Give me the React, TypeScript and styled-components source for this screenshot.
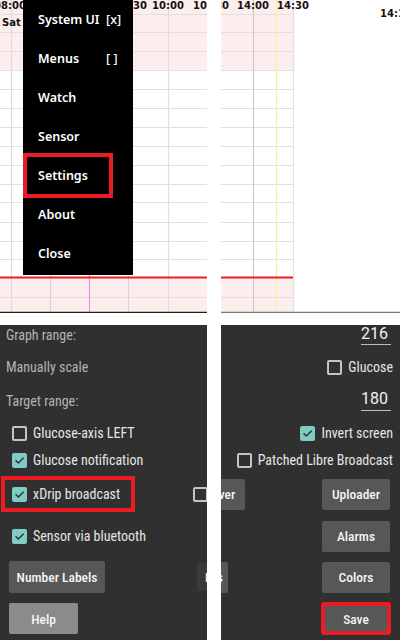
import React from "react";
import styled, { createGlobalStyle, css } from "styled-components";

const GlobalStyle = createGlobalStyle`
  html, body { margin: 0; padding: 0; background: #ffffff; }
  #root { width: 400px; height: 640px; }
`;

const Page = styled.div`
  width: 400px;
  height: 640px;
  display: grid;
  grid-template-columns: 207px 179px;
  grid-template-rows: 313px 315px;
  column-gap: 14px;
  row-gap: 12px;
  background: #ffffff;
  overflow: hidden;
`;

const GraphPane = styled.div`
  position: relative;
  overflow: hidden;
  background: #ffffff;
`;

const ChartSvg = styled.svg`
  display: block;
  font-family: "DejaVu Sans", sans-serif;
  font-weight: 700;
  font-size: 10px;
`;

type Vertical = { x: number; color: string };
type Label = { x: number; y: number; text: string; anchor?: "middle" | "start" };

const H_LINES = [14, 32, 51, 70, 89, 108, 127, 146, 165, 184, 202, 222, 241, 259, 297];

function Graph(props: {
  width: number;
  gridWidth: number;
  verticals: Vertical[];
  labels: Label[];
  baseColor: string;
}) {
  const { width, gridWidth, verticals, labels, baseColor } = props;
  return (
    <ChartSvg width={width} height={313} viewBox={`0 0 ${width} 313`}>
      <rect x={0} y={0} width={gridWidth} height={70} fill="#fdeeee" />
      <rect x={0} y={277} width={gridWidth} height={35} fill="#fdeeee" />
      {H_LINES.map((y) => (
        <line key={y} x1={0} x2={gridWidth} y1={y + 0.5} y2={y + 0.5} stroke="#e2dfdf" strokeWidth={1.2} />
      ))}
      {verticals.map((v) => (
        <line key={v.x} x1={v.x + 0.5} x2={v.x + 0.5} y1={0} y2={312} stroke={v.color} strokeWidth={1.2} />
      ))}
      <line x1={0} x2={gridWidth} y1={277.5} y2={277.5} stroke="#ee1c24" strokeWidth={2} />
      <line x1={0} x2={width} y1={312.5} y2={312.5} stroke={baseColor} strokeWidth={1.5} />
      {labels.map((l) => (
        <text key={l.text} x={l.x} y={l.y} textAnchor={l.anchor ?? "middle"} fill="#111111">
          {l.text}
        </text>
      ))}
    </ChartSvg>
  );
}

const Menu = styled.div`
  position: absolute;
  left: 23px;
  top: 0;
  width: 110px;
  height: 275px;
  background: #000000;
  display: flex;
  flex-direction: column;
`;

const MenuItem = styled.div<{ $selected?: boolean }>`
  position: relative;
  height: 39px;
  flex: none;
  display: grid;
  grid-template-columns: 68px auto;
  align-items: center;
  padding-left: 15px;
  color: #ffffff;
  font-family: "Noto Sans", sans-serif;
  font-weight: 600;
  font-size: 12.5px;
  white-space: nowrap;
  ${(p) =>
    p.$selected &&
    css`
      &::after {
        content: "";
        position: absolute;
        left: 0;
        top: -3px;
        width: 90px;
        height: 45px;
        box-sizing: border-box;
        border: 4px solid #ed1c24;
      }
    `}
`;

const Flag = styled.span`
  font-weight: 500;
  white-space: pre;
`;

const SettingsPane = styled.div`
  background: #303030;
  overflow: hidden;
  display: flex;
  flex-direction: column;
  font-family: "Roboto Condensed", Roboto, sans-serif;
`;

const Row = styled.div<{ $top: number; $h: number; $justify?: string; $padL?: number; $padR?: number }>`
  position: relative;
  flex: none;
  margin-top: ${(p) => p.$top}px;
  height: ${(p) => p.$h}px;
  display: flex;
  align-items: center;
  justify-content: ${(p) => p.$justify ?? "flex-start"};
  padding-left: ${(p) => p.$padL ?? 0}px;
  padding-right: ${(p) => p.$padR ?? 0}px;
`;

const SectionLabel = styled.span`
  color: #b4b4b4;
  font-size: 14px;
  white-space: nowrap;
`;

const CheckItem = styled.label<{ $highlight?: boolean }>`
  position: relative;
  display: flex;
  align-items: center;
  gap: 6px;
  color: #e6e6e6;
  font-size: 14px;
  white-space: nowrap;
  ${(p) =>
    p.$highlight &&
    css`
      &::after {
        content: "";
        position: absolute;
        left: -11px;
        top: -10px;
        width: 134px;
        height: 36px;
        box-sizing: border-box;
        border: 4px solid #ed1c24;
      }
    `}
`;

const Box = styled.span<{ $checked?: boolean; $edge?: number }>`
  flex: none;
  width: 15px;
  height: 15px;
  box-sizing: border-box;
  border-radius: 2px;
  border: 2px solid ${(p) => (p.$checked ? "#80cbc4" : "#c4c4c4")};
  background: ${(p) => (p.$checked ? "#80cbc4" : "transparent")};
  margin-right: ${(p) => p.$edge ?? 0}px;
  display: flex;
  align-items: center;
  justify-content: center;
`;

const ValueField = styled.div<{ $h: number }>`
  width: 30px;
  height: ${(p) => p.$h}px;
  box-sizing: border-box;
  margin-right: 9px;
  border-bottom: 1.5px solid #bdbdbd;
  color: #f2f2f2;
  font-family: Roboto, sans-serif;
  font-size: 16px;
  line-height: 18px;
  text-align: right;
  padding-right: 4px;
`;

const Button = styled.div<{
  $w: number;
  $ml?: number;
  $mr?: number;
  $bg?: string;
  $h?: number;
  $textAlign?: string;
  $highlight?: boolean;
}>`
  flex: none;
  box-sizing: border-box;
  width: ${(p) => p.$w}px;
  height: ${(p) => p.$h ?? 31}px;
  margin-left: ${(p) => p.$ml ?? 0}px;
  margin-right: ${(p) => p.$mr ?? 0}px;
  background: ${(p) => p.$bg ?? "#575757"};
  border-radius: 2px;
  color: #f4f4f4;
  font-weight: 500;
  font-size: 13.5px;
  display: flex;
  align-items: center;
  justify-content: ${(p) => p.$textAlign ?? "center"};
  padding: 0 5px;
  white-space: nowrap;
  ${(p) =>
    p.$highlight &&
    css`
      outline: 4px solid #ed1c24;
      outline-offset: -3px;
    `}
`;

const CheckMark = () => (
  <svg width="13" height="13" viewBox="0 0 24 24" fill="none">
    <path d="M4.5 12.5l5 5L20 7" stroke="#263238" strokeWidth="3" strokeLinecap="square" />
  </svg>
);

function Check(props: { checked?: boolean; label: string; highlight?: boolean }) {
  return (
    <CheckItem $highlight={props.highlight}>
      <Box $checked={props.checked}>{props.checked && <CheckMark />}</Box>
      {props.label}
    </CheckItem>
  );
}

export default function App() {
  return (
    <>
      <GlobalStyle />
      <Page>
        <GraphPane>
          <Graph
            width={207}
            gridWidth={207}
            baseColor="#1e1e1e"
            verticals={[
              { x: 11, color: "#e0dcdc" },
              { x: 50, color: "#d8d4d4" },
              { x: 89, color: "#f28cf0" },
              { x: 128, color: "#d8d4d4" },
              { x: 168, color: "#e0dcdc" },
            ]}
            labels={[
              { x: 10, y: 9, text: "08:00" },
              { x: 131, y: 9, text: "09:30" },
              { x: 168, y: 9, text: "10:00" },
              { x: 209, y: 9, text: "10:30" },
              { x: 2, y: 26, text: "Sat 07.03.", anchor: "start" },
            ]}
          />
          <Menu>
            <MenuItem>
              System UI <Flag>[x]</Flag>
            </MenuItem>
            <MenuItem>
              Menus <Flag>[ ]</Flag>
            </MenuItem>
            <MenuItem>Watch</MenuItem>
            <MenuItem>Sensor</MenuItem>
            <MenuItem $selected>Settings</MenuItem>
            <MenuItem>About</MenuItem>
            <MenuItem>Close</MenuItem>
          </Menu>
        </GraphPane>

        <GraphPane>
          <Graph
            width={179}
            gridWidth={72}
            baseColor="#777777"
            verticals={[
              { x: 32, color: "#cfcaca" },
              { x: 55, color: "#f6f29a" },
              { x: 72, color: "#e4e0e0" },
            ]}
            labels={[
              { x: -8, y: 9, text: "13:30" },
              { x: 32, y: 9, text: "14:00" },
              { x: 72, y: 9, text: "14:30" },
              { x: 159, y: 17, text: "14:15", anchor: "start" },
            ]}
          />
        </GraphPane>

        <SettingsPane>
          <Row $top={0} $h={20} $padL={6}>
            <SectionLabel>Graph range:</SectionLabel>
          </Row>
          <Row $top={13} $h={18} $padL={6}>
            <SectionLabel>Manually scale</SectionLabel>
          </Row>
          <Row $top={14} $h={21} $padL={6}>
            <SectionLabel>Target range:</SectionLabel>
          </Row>
          <Row $top={13} $h={18} $padL={12}>
            <Check label="Glucose-axis LEFT" />
          </Row>
          <Row $top={9} $h={18} $padL={12}>
            <Check checked label="Glucose notification" />
          </Row>
          <Row $top={9} $h={32} $padL={12} $justify="space-between">
            <Check checked highlight label="xDrip broadcast" />
            <Box $edge={-1} />
          </Row>
          <Row $top={10} $h={32} $padL={12}>
            <Check checked label="Sensor via bluetooth" />
          </Row>
          <Row $top={9} $h={32} $justify="space-between">
            <Button $w={96} $h={32} $ml={9}>
              Number Labels
            </Button>
            <Button $w={80} $h={28} $mr={-70} $bg="#3a3a3a" $textAlign="flex-start">
              &nbsp;Libre View
            </Button>
          </Row>
          <Row $top={10} $h={31}>
            <Button $w={69} $ml={9} $bg="#8b8b8b">
              Help
            </Button>
          </Row>
        </SettingsPane>

        <SettingsPane>
          <Row $top={0} $h={20} $justify="flex-end">
            <ValueField $h={20}>216</ValueField>
          </Row>
          <Row $top={13} $h={18} $justify="flex-end" $padR={7}>
            <Check label="Glucose" />
          </Row>
          <Row $top={14} $h={21} $justify="flex-end">
            <ValueField $h={21}>180</ValueField>
          </Row>
          <Row $top={13} $h={18} $justify="flex-end" $padR={7}>
            <Check checked label="Invert screen" />
          </Row>
          <Row $top={9} $h={18} $justify="flex-end" $padR={7}>
            <Check label="Patched Libre Broadcast" />
          </Row>
          <Row $top={9} $h={32} $justify="space-between" $padR={10}>
            <Button $w={54} $ml={-30}>
              Server
            </Button>
            <Button $w={68}>Uploader</Button>
          </Row>
          <Row $top={10} $h={32} $justify="flex-end" $padR={10}>
            <Button $w={68}>Alarms</Button>
          </Row>
          <Row $top={9} $h={32} $justify="space-between" $padR={10}>
            <Button $w={70} $ml={-63} $textAlign="flex-end">
              Labels
            </Button>
            <Button $w={68}>Colors</Button>
          </Row>
          <Row $top={10} $h={31} $justify="flex-end" $padR={10}>
            <Button $w={68} $highlight>
              Save
            </Button>
          </Row>
        </SettingsPane>
      </Page>
    </>
  );
}
